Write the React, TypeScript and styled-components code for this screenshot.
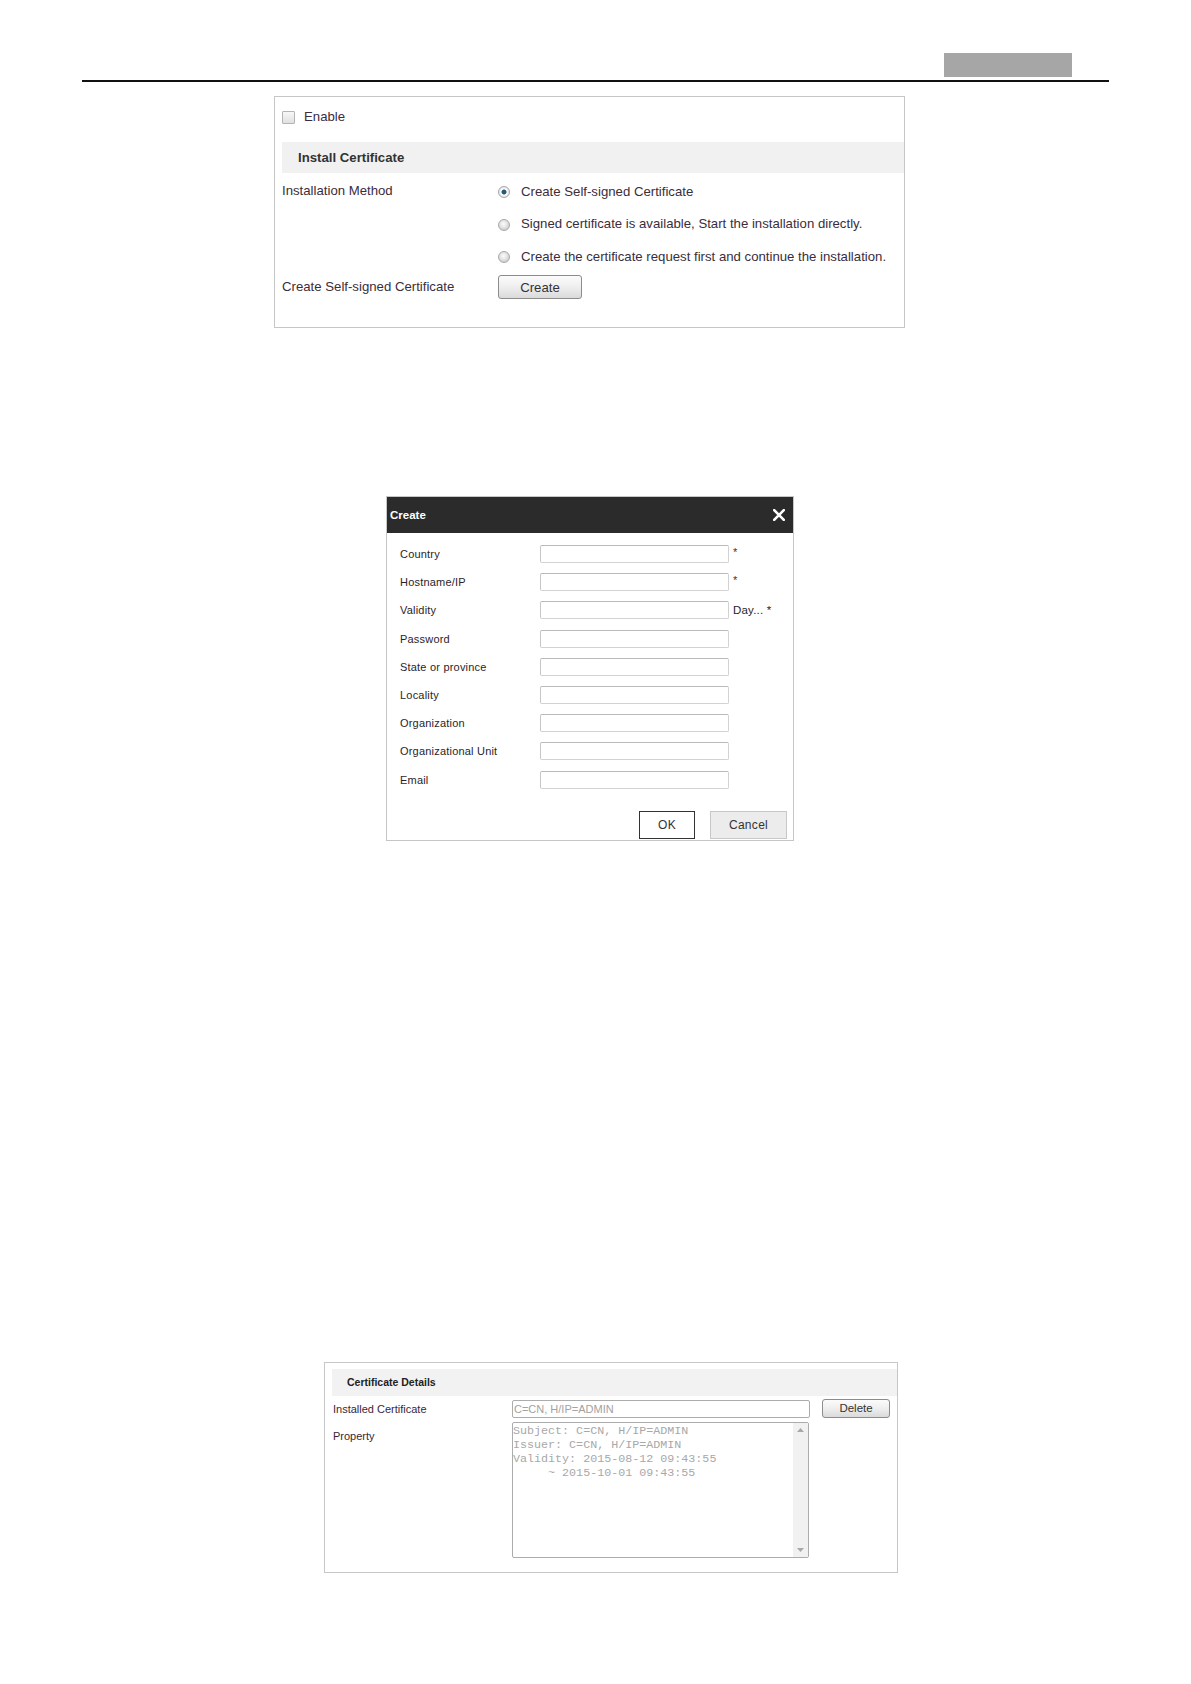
import React from "react";
import styled, { createGlobalStyle } from "styled-components";

const GlobalStyle = createGlobalStyle`
  html, body { margin: 0; padding: 0; background: #ffffff; }
  body { font-family: "Liberation Sans", Arial, sans-serif; color: #333333; }
  * { box-sizing: border-box; }
`;

const Page = styled.div`
  width: 1191px;
  min-height: 1684px;
`;

const TopRule = styled.header`
  display: flex;
  justify-content: flex-end;
  margin: 0 82px;
  padding-top: 53px;
  padding-bottom: 3px;
  border-bottom: 2px solid #111111;
`;

const ChapterTab = styled.div`
  width: 128px;
  height: 24px;
  margin-right: 37px;
  background: #a6a6a6;
`;

const Panel = styled.section<{ $left: number; $width: number; $top: number }>`
  margin: ${(p) => p.$top}px 0 0 ${(p) => p.$left}px;
  width: ${(p) => p.$width}px;
  border: 1px solid #c6c6c6;
  background: #ffffff;
`;

/* ---------- Panel 1 ---------- */

const SettingsBody = styled.div`
  padding: 9px 0 28px 7px;
  font-size: 13.2px;
  color: #3b2d3b;
`;

const EnableRow = styled.label`
  display: flex;
  align-items: center;
  gap: 9px;
  height: 20px;
`;

const CheckBox = styled.span`
  width: 13px;
  height: 13px;
  margin-top: 2px;
  border: 1px solid #b4b4b4;
  border-radius: 1px;
  background: linear-gradient(#f7f7f7, #e0e0e0);
`;

const SectionBar = styled.div`
  display: flex;
  align-items: center;
  height: 31px;
  margin-top: 16px;
  padding-left: 16px;
  background: #f1f1f1;
  font-weight: bold;
  color: #333333;
`;

const SettingsGrid = styled.div`
  display: grid;
  grid-template-columns: 216px 1fr;
  row-gap: 9px;
  margin-top: 8px;
`;

const FieldLabel = styled.div<{ $h: number }>`
  line-height: ${(p) => p.$h}px;
  white-space: nowrap;
`;

const OptionList = styled.div`
  display: flex;
  flex-direction: column;
  gap: 12.5px;
`;

const Option = styled.div`
  display: flex;
  align-items: center;
  gap: 11px;
  height: 20px;
  white-space: nowrap;
`;

const Radio = styled.span<{ $checked?: boolean }>`
  flex: none;
  width: 12px;
  height: 12px;
  margin-top: 2px;
  border-radius: 50%;
  border: 1px solid #a8a8a8;
  background: ${(p) =>
    p.$checked
      ? "radial-gradient(circle at 50% 50%, #21506f 0, #2f6384 2.2px, #ffffff 2.9px, #f2f2f2 4px, #d4d4d4 6px)"
      : "radial-gradient(circle at 45% 40%, #fbfbfb 0, #e8e8e8 3px, #cfcfcf 6px)"};
`;

const GradientButton = styled.button<{ $w: number; $h: number; $size: number }>`
  width: ${(p) => p.$w}px;
  height: ${(p) => p.$h}px;
  padding: 0;
  border: 1px solid #8c8c8c;
  border-radius: 3px;
  background: linear-gradient(#fbfbfb, #f0f0f0 45%, #dadada);
  font-family: "Liberation Sans", Arial, sans-serif;
  font-size: ${(p) => p.$size}px;
  color: #333333;
`;

/* ---------- Dialog ---------- */

const DialogHeader = styled.div`
  display: flex;
  align-items: center;
  justify-content: space-between;
  height: 36px;
  padding: 0 8px 0 3px;
  background: #2b2b2b;
  color: #ffffff;
  font-size: 11.5px;
  font-weight: bold;
`;

const DialogBody = styled.div`
  padding: 12px 0 0 13px;
`;

const FormGrid = styled.div`
  display: grid;
  grid-template-columns: 140px 189px auto;
  grid-auto-rows: 18px;
  row-gap: 10.2px;
  font-size: 11px;
  letter-spacing: 0.2px;
  color: #2a1e2a;
`;

const FormLabel = styled.div`
  line-height: 18px;
  white-space: nowrap;
`;

const TextInput = styled.div`
  height: 18px;
  border: 1px solid #d2d2d2;
  border-top-color: #b9b9b9;
  border-left-color: #c6c6c6;
  border-radius: 2px;
  background: #ffffff;
`;

const Suffix = styled.div`
  padding-left: 4px;
  line-height: 14px;
  font-size: 11px;
  color: #4a2a4a;
  white-space: nowrap;
`;

const DayHint = styled.span`
  font-size: 11.5px;
  line-height: 18px;
  color: #2a1e2a;
`;

const DialogActions = styled.div`
  display: flex;
  justify-content: flex-end;
  gap: 15px;
  margin-top: 22px;
  padding: 0 6px 1px 0;
`;

const FlatButton = styled.button<{ $w: number; $primary?: boolean }>`
  width: ${(p) => p.$w}px;
  height: 28px;
  padding: 0;
  border: 1px solid ${(p) => (p.$primary ? "#333333" : "#c8c8c8")};
  background: ${(p) => (p.$primary ? "#ffffff" : "#ececec")};
  font-family: "Liberation Sans", Arial, sans-serif;
  font-size: 12px;
  letter-spacing: 0.3px;
  color: #333333;
`;

/* ---------- Certificate details ---------- */

const CertBody = styled.div`
  padding: 6px 0 14px 7px;
`;

const CertBar = styled.div`
  display: flex;
  align-items: center;
  height: 27px;
  padding-left: 15px;
  background: #f2f2f2;
  font-size: 10.5px;
  font-weight: bold;
  color: #222222;
`;

const CertGrid = styled.div`
  display: grid;
  grid-template-columns: 168px 298px 68px;
  column-gap: 12px;
  row-gap: 4px;
  margin-top: 3px;
  font-size: 11px;
  color: #3a1f3a;
`;

const CertLabel = styled.div<{ $pad: number }>`
  padding: ${(p) => p.$pad}px 0 0 1px;
  line-height: 18px;
  white-space: nowrap;
`;

const ReadOnlyInput = styled.div`
  align-self: end;
  display: flex;
  align-items: center;
  height: 18px;
  padding-left: 1px;
  border: 1px solid #acacac;
  border-radius: 2px;
  color: #a2a2a2;
  font-size: 11px;
  white-space: nowrap;
`;

const PropertyBox = styled.div`
  display: flex;
  width: 297px;
  height: 136px;
  border: 1px solid #acacac;
  border-radius: 2px;
  overflow: hidden;
`;

const PropertyText = styled.pre`
  flex: 1;
  margin: 0;
  padding: 1px 0 0 0;
  font-family: "Liberation Mono", "Courier New", monospace;
  font-size: 11.7px;
  line-height: 14.2px;
  color: #a8a8a8;
`;

const ScrollTrack = styled.div`
  display: flex;
  flex-direction: column;
  justify-content: space-between;
  align-items: center;
  width: 15px;
  padding: 5px 0 5px;
  background: #f1f1f1;
`;

const Arrow = ({ down }: { down?: boolean }) => (
  <svg width="7" height="4" viewBox="0 0 7 4">
    <path d={down ? "M0 0 L7 0 L3.5 4 Z" : "M0 4 L7 4 L3.5 0 Z"} fill="#a8a8a8" />
  </svg>
);

const CloseIcon = () => (
  <svg width="12" height="12" viewBox="0 0 12 12">
    <path d="M1.2 1.2 L10.8 10.8 M10.8 1.2 L1.2 10.8" stroke="#ffffff" strokeWidth="2.6" strokeLinecap="square" />
  </svg>
);

const fields: { label: string; suffix?: React.ReactNode }[] = [
  { label: "Country", suffix: "*" },
  { label: "Hostname/IP", suffix: "*" },
  { label: "Validity", suffix: <DayHint>Day... *</DayHint> },
  { label: "Password" },
  { label: "State or province" },
  { label: "Locality" },
  { label: "Organization" },
  { label: "Organizational Unit" },
  { label: "Email" },
];

const propertyText = `Subject: C=CN, H/IP=ADMIN
Issuer: C=CN, H/IP=ADMIN
Validity: 2015-08-12 09:43:55
     ~ 2015-10-01 09:43:55`;

export default function App() {
  return (
    <Page>
      <GlobalStyle />
      <TopRule>
        <ChapterTab />
      </TopRule>

      <Panel $left={274} $width={631} $top={14}>
        <SettingsBody>
          <EnableRow>
            <CheckBox />
            Enable
          </EnableRow>
          <SectionBar>Install Certificate</SectionBar>
          <SettingsGrid>
            <FieldLabel $h={20}>Installation Method</FieldLabel>
            <OptionList>
              <Option>
                <Radio $checked />
                Create Self-signed Certificate
              </Option>
              <Option>
                <Radio />
                Signed certificate is available, Start the installation directly.
              </Option>
              <Option>
                <Radio />
                Create the certificate request first and continue the installation.
              </Option>
            </OptionList>
            <FieldLabel $h={24}>Create Self-signed Certificate</FieldLabel>
            <div>
              <GradientButton $w={84} $h={24} $size={13.2}>
                Create
              </GradientButton>
            </div>
          </SettingsGrid>
        </SettingsBody>
      </Panel>

      <Panel $left={386} $width={408} $top={168}>
        <DialogHeader>
          <span>Create</span>
          <CloseIcon />
        </DialogHeader>
        <DialogBody>
          <FormGrid>
            {fields.map((f) => (
              <React.Fragment key={f.label}>
                <FormLabel>{f.label}</FormLabel>
                <TextInput />
                <Suffix>{f.suffix}</Suffix>
              </React.Fragment>
            ))}
          </FormGrid>
          <DialogActions>
            <FlatButton $w={56} $primary>
              OK
            </FlatButton>
            <FlatButton $w={77}>Cancel</FlatButton>
          </DialogActions>
        </DialogBody>
      </Panel>

      <Panel $left={324} $width={574} $top={521}>
        <CertBody>
          <CertBar>Certificate Details</CertBar>
          <CertGrid>
            <CertLabel $pad={1}>Installed Certificate</CertLabel>
            <ReadOnlyInput>C=CN, H/IP=ADMIN</ReadOnlyInput>
            <GradientButton $w={68} $h={19} $size={11.5}>
              Delete
            </GradientButton>
            <CertLabel $pad={5}>Property</CertLabel>
            <PropertyBox>
              <PropertyText>{propertyText}</PropertyText>
              <ScrollTrack>
                <Arrow />
                <Arrow down />
              </ScrollTrack>
            </PropertyBox>
          </CertGrid>
        </CertBody>
      </Panel>
    </Page>
  );
}
